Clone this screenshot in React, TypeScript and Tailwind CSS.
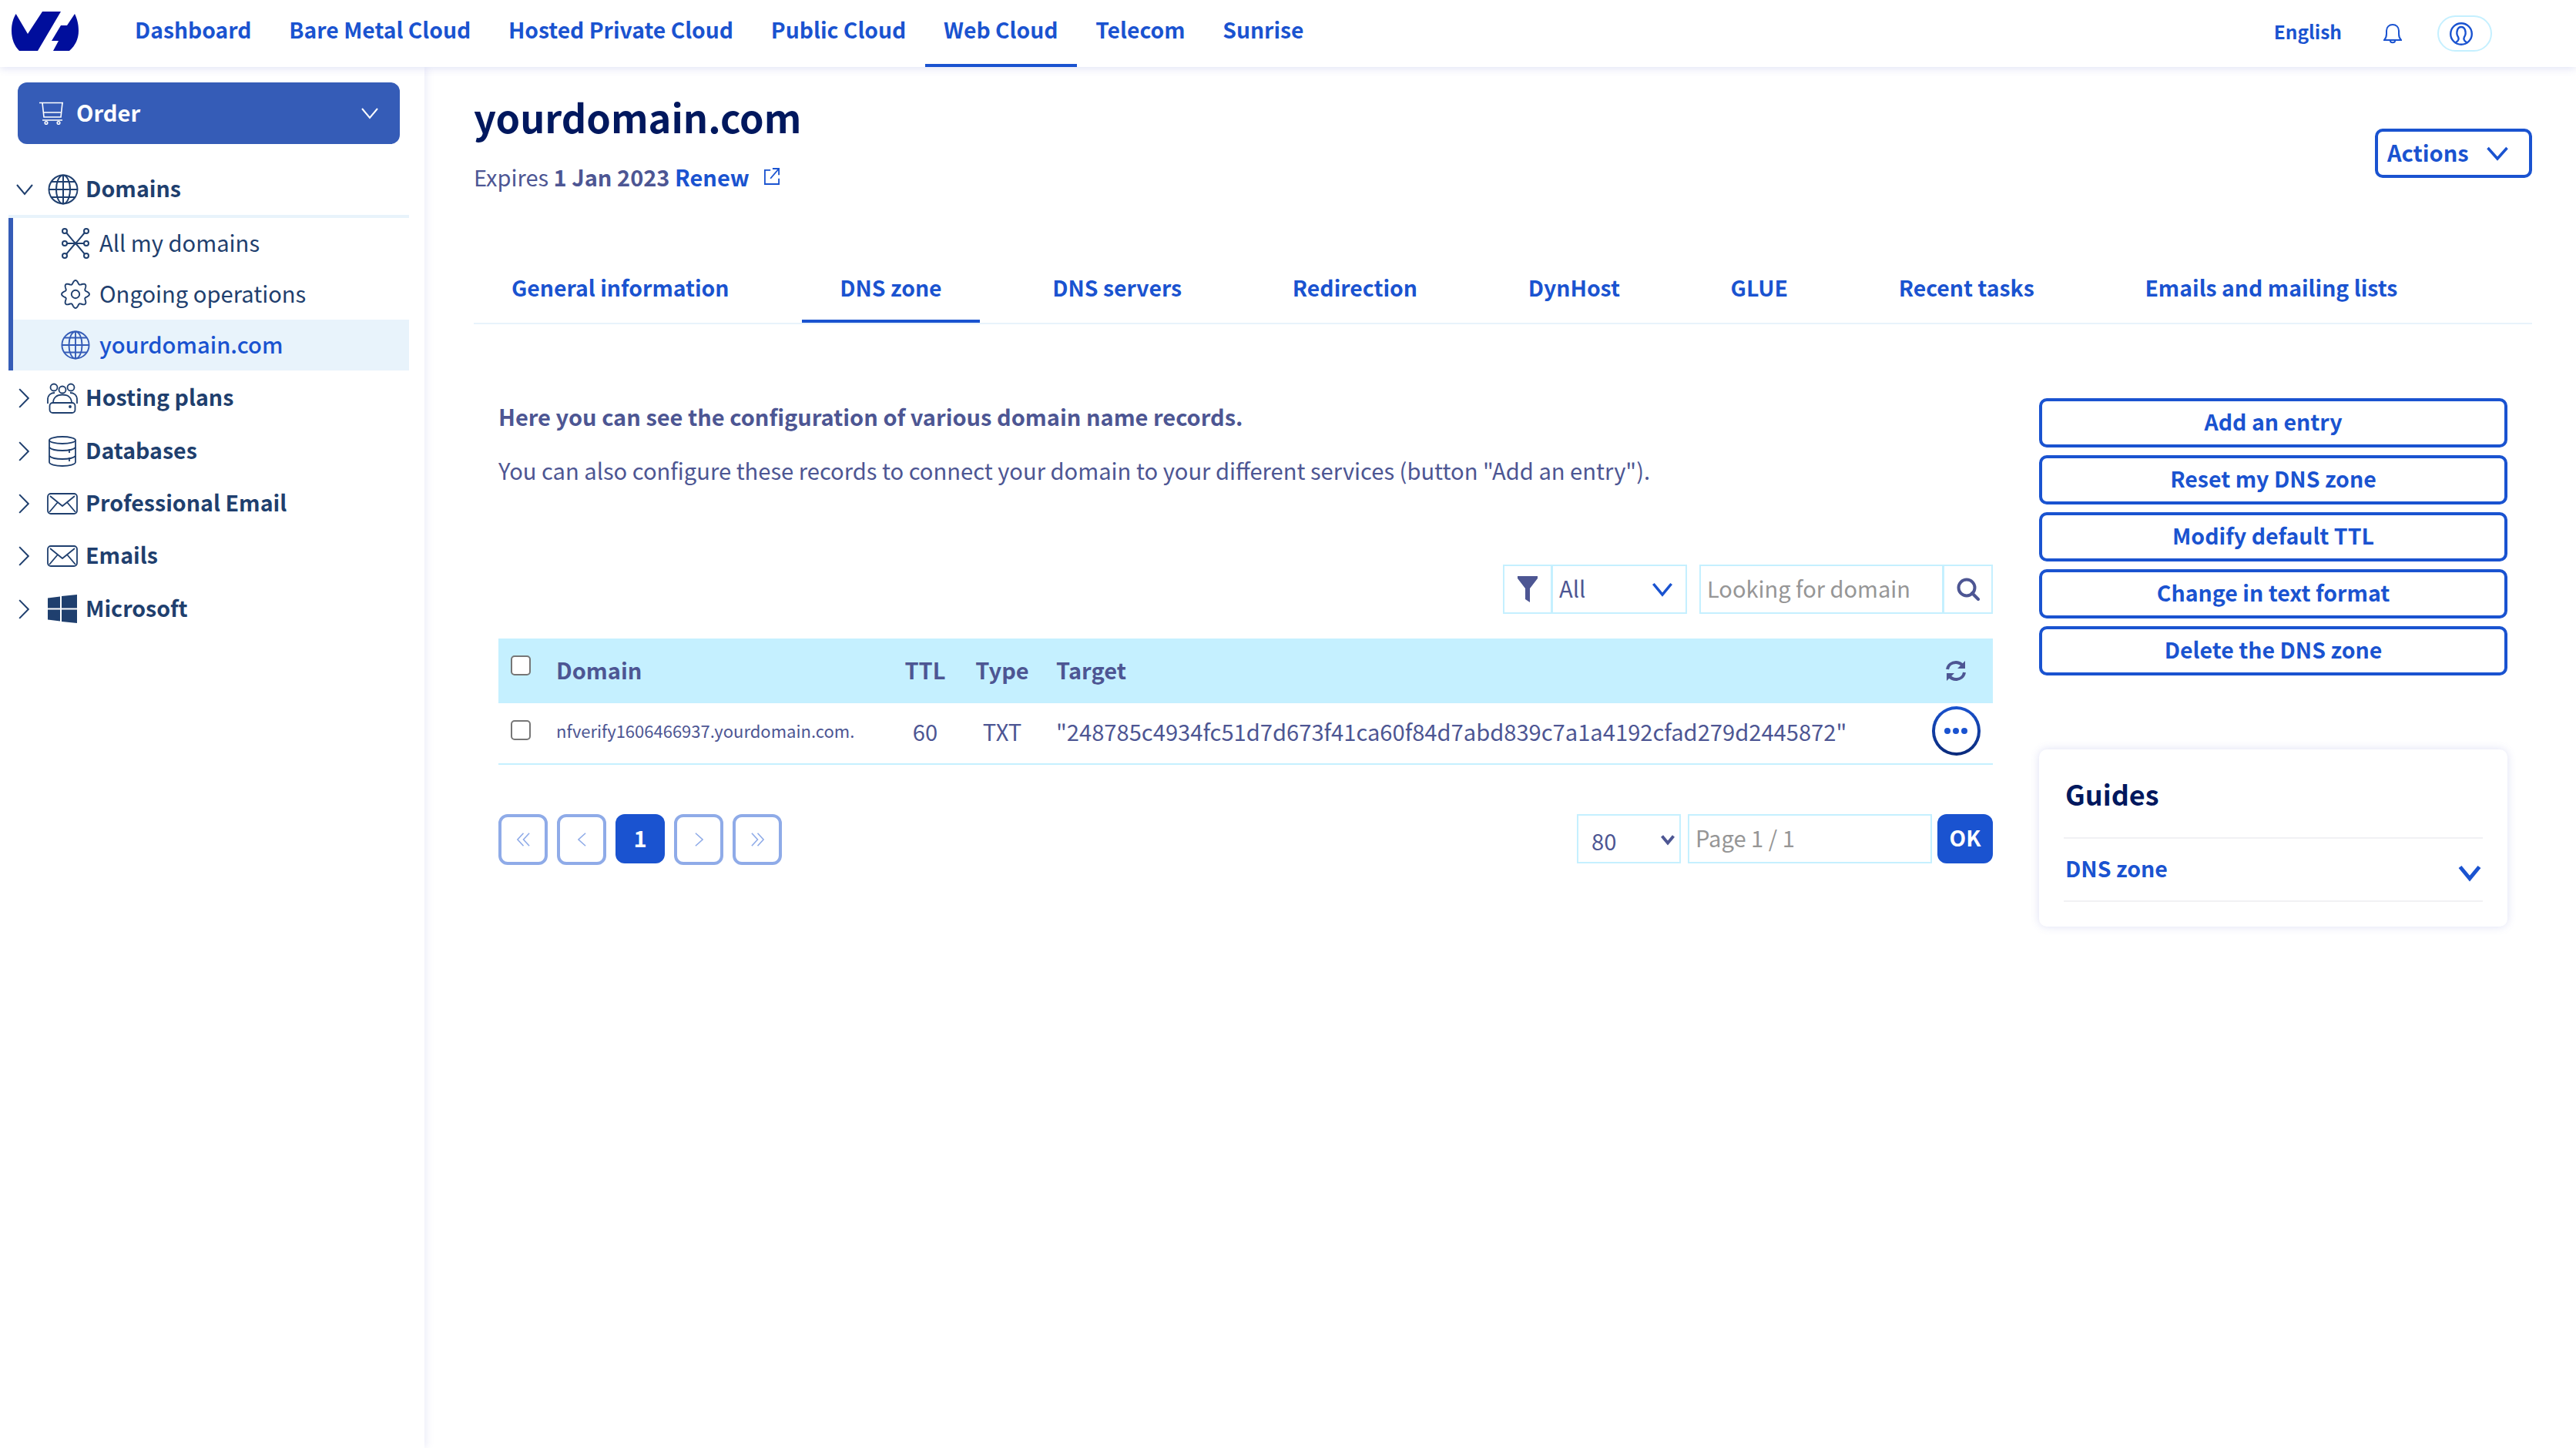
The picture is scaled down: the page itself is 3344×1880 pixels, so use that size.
import React from "react";

type IconProps = { className?: string };

const Chev = ({ dir, className, w = 2.5 }: { dir: "down" | "right" | "left"; className?: string; w?: number }) => {
  const pts = dir === "down" ? "M2 6 L12 18 L22 6" : dir === "right" ? "M2 1 L22 12 L2 23" : "M22 1 L2 12 L22 23";
  return (
    <svg viewBox="0 0 24 24" preserveAspectRatio="none" className={className} fill="none" stroke="currentColor" strokeWidth={w}>
      <path d={pts} vectorEffect="non-scaling-stroke" />
    </svg>
  );
};

const Logo = () => (
  <svg viewBox="0 0 88 52" className="w-[88px] h-[52px] shrink-0" fill="#000e9c">
    <path d="M5.7 3 L21 29 L40 0 L64 0 L34 51 L10 51 C4 45 0 36 0 25 C0 16 2 9 5.7 3 Z" />
    <path d="M82 3 L72 18 L64 18 L52 38 L61 38 L54 51 L75 51 C83 44 87 35 87 25 C87 16 85 9 82 3 Z" />
  </svg>
);

const Globe = ({ className }: IconProps) => (
  <svg viewBox="0 0 40 40" className={className} fill="none" stroke="currentColor" strokeWidth="2">
    <circle cx="20" cy="20" r="18.5" />
    <ellipse cx="20" cy="20" rx="9" ry="18.5" />
    <path d="M20 1.5 V38.5 M1.5 20 H38.5 M4.5 10 H35.5 M4.5 30 H35.5" />
  </svg>
);

const Network = ({ className }: IconProps) => (
  <svg viewBox="0 0 36 40" className={className} fill="none" stroke="currentColor" strokeWidth="2">
    <path d="M6 6 C11 12 15 17 18 20 C21 17 25 12 30 6 M6 34 C11 28 15 23 18 20 C21 23 25 28 30 34 M7 20 H29" />
    <circle cx="4" cy="4" r="3" />
    <circle cx="32" cy="4" r="3" />
    <circle cx="4" cy="20" r="3" />
    <circle cx="32" cy="20" r="3" />
    <circle cx="4" cy="36" r="3" />
    <circle cx="32" cy="36" r="3" />
  </svg>
);

const gearPath = (() => {
  const parts: string[] = [];
  for (let i = 0; i <= 160; i++) {
    const a = (i / 160) * Math.PI * 2;
    const r = 16.5 + 2.4 * Math.cos(8 * a);
    parts.push(`${i === 0 ? "M" : "L"}${(20 + r * Math.sin(a)).toFixed(2)} ${(20 - r * Math.cos(a)).toFixed(2)}`);
  }
  return parts.join(" ") + " Z";
})();

const Gear = ({ className }: IconProps) => (
  <svg viewBox="0 0 40 40" className={className} fill="none" stroke="currentColor" strokeWidth="2">
    <path d={gearPath} />
    <circle cx="20" cy="20" r="5.5" />
  </svg>
);

const Group = ({ className }: IconProps) => (
  <svg viewBox="0 0 40 40" className={className} fill="none" stroke="currentColor" strokeWidth="1.8" strokeLinejoin="round">
    <circle cx="9" cy="6" r="4.5" />
    <circle cx="31" cy="6" r="4.5" />
    <circle cx="20" cy="9" r="4.5" />
    <path d="M1 27 V22 C1 15 6 13 10 13 M39 27 V22 C39 15 34 13 30 13" />
    <path d="M8 26 C8 19 13 15.5 20 15.5 C27 15.5 32 19 32 26" />
    <rect x="3.5" y="26" width="33" height="13" rx="4" />
    <circle cx="30" cy="31" r="1" fill="currentColor" />
  </svg>
);

const Db = ({ className }: IconProps) => (
  <svg viewBox="0 0 36 40" className={className} fill="none" stroke="currentColor" strokeWidth="1.8">
    <ellipse cx="18" cy="5.5" rx="17" ry="4.5" />
    <path d="M1 5.5 V34 C1 37 9 39 18 39 C27 39 35 37 35 34 V5.5" />
    <path d="M1 15 C4 18 10 19 18 19 C26 19 32 18 35 15 M1 26 C4 29 10 30 18 30 C26 30 32 29 35 26 M27 17 V22 M27 28 V33" />
  </svg>
);

const Mail = ({ className }: IconProps) => (
  <svg viewBox="0 0 40 28" className={className} fill="none" stroke="currentColor" strokeWidth="1.8" strokeLinejoin="round">
    <rect x="1" y="1" width="38" height="26" rx="4" />
    <path d="M4 4 L20 17 L36 4 M3 25 L14 12 M37 25 L26 12" />
  </svg>
);

const Windows = ({ className }: IconProps) => (
  <svg viewBox="0 0 38 37" className={className} fill="currentColor">
    <path d="M0 4.5 L16 2.5 V17.5 H0 Z M18 2 L38 0 V17.5 H18 Z M0 19.5 H16 V34.5 L0 32.5 Z M18 19.5 H38 V37 L18 35 Z" />
  </svg>
);

const Cart = ({ className }: IconProps) => (
  <svg viewBox="0 0 32 30" className={className} fill="none" stroke="currentColor" strokeWidth="1.6">
    <path d="M0 1.5 H31 M4 1.5 L6 20 H28 L30 1.5 M6 14 H29 M4 24 H30" />
    <circle cx="9" cy="27.5" r="1.8" />
    <circle cx="25" cy="27.5" r="1.8" />
  </svg>
);

const navItems = ["Dashboard", "Bare Metal Cloud", "Hosted Private Cloud", "Public Cloud", "Web Cloud", "Telecom", "Sunrise"];
const tabs = ["General information", "DNS zone", "DNS servers", "Redirection", "DynHost", "GLUE", "Recent tasks", "Emails and mailing lists"];
const actions = ["Add an entry", "Reset my DNS zone", "Modify default TTL", "Change in text format", "Delete the DNS zone"];

const Check = ({ className = "" }: { className?: string }) => (
  <span className={`block w-[26px] h-[26px] rounded-[5px] border-2 border-[#767676] bg-white shrink-0 ${className}`} />
);

const TopRow = ({ label, icon }: { label: string; icon: React.ReactNode }) => (
  <div className="h-[68.4px] flex items-center pl-[24px] text-[#1f3f6e] font-semibold text-[28.6px]">
    <Chev dir="right" className="w-[14px] h-[26px]" w={2} />
    <span className="w-[40px] ml-[23px] flex justify-center">{icon}</span>
    <span className="ml-[10px] mb-[4px]">{label}</span>
  </div>
);

const SubRow = ({ label, icon, active }: { label: string; icon: React.ReactNode; active?: boolean }) => (
  <div className={`h-[66px] flex items-center pl-[62px] ${active ? "bg-[#e8f3fb] text-[#1a53d0] font-medium" : "text-[#1f3f6e]"}`}>
    <span className="w-[38px] flex justify-center">{icon}</span>
    <span className="ml-[12px] mb-[4px]">{label}</span>
  </div>
);

const PageBtn = ({ children }: { children: React.ReactNode }) => (
  <span className="w-[64px] h-[66px] rounded-[12px] border-[4px] border-[#8fabe8] text-[#8fabe8] flex items-center justify-center">{children}</span>
);

const DoubleChev = ({ flip }: { flip?: boolean }) => (
  <svg viewBox="0 0 20 24" preserveAspectRatio="none" className="w-[19px] h-[18px]" fill="none" stroke="currentColor" strokeWidth="1.6">
    {flip ? (
      <path d="M2 1 L10 12 L2 23 M10 1 L18 12 L10 23" vectorEffect="non-scaling-stroke" />
    ) : (
      <path d="M18 1 L10 12 L18 23 M10 1 L2 12 L10 23" vectorEffect="non-scaling-stroke" />
    )}
  </svg>
);

export default function App() {
  return (
    <div className="w-[3344px] h-[1880px] overflow-hidden bg-white flex flex-col text-[29.15px] leading-[44px] font-['Noto_Sans_CJK_SC','Noto_Sans',sans-serif] text-[#4d5693]">
      <header className="relative z-20 h-[87px] shrink-0 bg-white shadow-[0_2px_10px_rgba(90,100,200,0.18)] flex items-stretch pl-[15px] text-[28.3px] whitespace-nowrap">
        <div className="pt-[15px]">
          <Logo />
        </div>
        <nav className="flex ml-[47.6px] font-semibold text-[#1a53d0]">
          {navItems.map((n) => (
            <a key={n} className={`px-[24.4px] flex items-center pb-[7px] border-b-[4px] ${n === "Web Cloud" ? "border-[#1a53d0]" : "border-transparent"}`}>
              {n}
            </a>
          ))}
        </nav>
        <div className="ml-auto flex items-center pr-[109px] text-[#1a53d0]">
          <span className="font-semibold text-[24.5px] mb-[5px]">English</span>
          <svg viewBox="0 0 24 26" className="w-[24px] h-[26px] ml-[54px]" fill="none" stroke="currentColor" strokeWidth="2">
            <path d="M1 21 C3 19 4 17 4 13 V9 C4 4 7.5 1 12 1 C16.5 1 20 4 20 9 V13 C20 17 21 19 23 21 Z" />
            <path d="M9 22 C9 25 15 25 15 22" />
          </svg>
          <span className="ml-[46px] w-[71px] h-[47px] rounded-[24px] border-2 border-[#c5f0ff] flex items-center justify-center pr-[10px]">
            <svg viewBox="0 0 30 32" className="w-[30px] h-[32px]" fill="none" stroke="currentColor" strokeWidth="2.4">
              <circle cx="15" cy="16" r="13.8" />
              <path d="M8 27 C12 25 12 22 11 20 C9 17 9 14 10 11 C11 8 13 7 15 7 C17 7 19 8 20 11 C21 14 21 17 19 20 C18 22 18 25 22 27" />
            </svg>
          </span>
        </div>
      </header>

      <div className="flex flex-1 min-h-0">
        <aside className="relative z-10 w-[551px] shrink-0 bg-white shadow-[2px_0_10px_rgba(90,100,200,0.13)] pt-[20px]">
          <button className="mx-[23px] w-[496px] h-[80px] rounded-[12px] bg-[#355cb7] text-white font-semibold flex items-center pl-[28px] pr-[27px]">
            <Cart className="w-[32px] h-[30px]" />
            <span className="ml-[16px] mb-[4px]">Order</span>
            <Chev dir="down" className="w-[24px] h-[24px] ml-auto" w={2} />
          </button>

          <div className="mt-[26px] ml-[11px] w-[520px]">
            <div className="h-[70px] border-b-[4px] border-[#e8f3fb] flex items-center pl-[9px] text-[#1f3f6e] font-semibold text-[28.6px]">
              <Chev dir="down" className="w-[24px] h-[24px]" w={2} />
              <Globe className="w-[40px] h-[40px] ml-[18px]" />
              <span className="ml-[9px] mb-[4px]">Domains</span>
            </div>
            <div className="border-l-[6px] border-[#355cb7]">
              <SubRow label="All my domains" icon={<Network className="w-[36px] h-[40px]" />} />
              <SubRow label="Ongoing operations" icon={<Gear className="w-[38px] h-[40px]" />} />
              <SubRow label="yourdomain.com" active icon={<Globe className="w-[38px] h-[40px] text-[#355cb7]" />} />
            </div>
          </div>

          <div className="mt-[2px]">
            <TopRow label="Hosting plans" icon={<Group className="w-[40px] h-[40px]" />} />
            <TopRow label="Databases" icon={<Db className="w-[36px] h-[40px]" />} />
            <TopRow label="Professional Email" icon={<Mail className="w-[40px] h-[28px]" />} />
            <TopRow label="Emails" icon={<Mail className="w-[40px] h-[28px]" />} />
            <TopRow label="Microsoft" icon={<Windows className="w-[38px] h-[37px]" />} />
          </div>
        </aside>

        <main className="flex-1 min-w-0 pl-[64px] pr-[57px]">
          <div className="flex justify-between items-start">
            <div className="pt-[32px]">
              <h1 className="h-[72px] leading-[64px] text-[50.5px] font-bold text-[#00185e]">yourdomain.com</h1>
              <p className="mt-[18px] h-[40px] leading-[40px] flex items-center text-[29px]">
                <span>Expires&nbsp;</span>
                <span className="font-semibold">1 Jan 2023&nbsp;</span>
                <a className="font-semibold text-[#1a53d0]">Renew</a>
                <svg viewBox="0 0 22 24" className="w-[20px] h-[22px] ml-[19px] text-[#1a53d0]" fill="none" stroke="currentColor" strokeWidth="2">
                  <path d="M9 3 H1 V23 H21 V15 M12 1 H21 V10 M21 1 L9 15" />
                </svg>
              </p>
            </div>
            <button className="mt-[80px] w-[204px] h-[64px] border-[4px] border-[#1a53d0] rounded-[10px] text-[#1a53d0] font-semibold flex items-center pl-[12px] text-[29px]">
              <span className="mb-[4px]">Actions</span>
              <Chev dir="down" className="w-[30px] h-[28px] ml-[22px]" w={3.5} />
            </button>
          </div>

          <div className="mt-[82px] flex h-[90px] border-b-2 border-[#e8f3fb] gap-[45.7px] text-[28.4px] font-semibold text-[#1a53d0] whitespace-nowrap">
            {tabs.map((t) => (
              <a key={t} className={`h-[88px] px-[49px] flex items-center border-b-[4px] ${t === "DNS zone" ? "border-[#1a53d0]" : "border-transparent"}`}>
                {t}
              </a>
            ))}
          </div>

          <div className="pl-[32px] pr-[32px] flex gap-[60px]">
            <section className="w-[1940px] shrink-0">
              <p className="mt-[97px] font-semibold text-[29px]">Here you can see the configuration of various domain name records.</p>
              <p className="mt-[26px]">You can also configure these records to connect your domain to your different services (button "Add an entry").</p>

              <div className="mt-[101px] h-[64px] flex justify-end">
                <div className="w-[64px] border-2 border-[#c5f0ff] flex items-center justify-center">
                  <svg viewBox="0 0 26 34" className="w-[26px] h-[34px]" fill="#4d5693">
                    <path d="M0 0 H26 V3 L16 16 V34 L10 30 V16 L0 3 Z" />
                  </svg>
                </div>
                <div className="w-[176px] -ml-[1px] border-2 border-[#c5f0ff] flex items-center justify-between pl-[8px] pr-[16px]">
                  <span className="mb-[4px]">All</span>
                  <Chev dir="down" className="w-[28px] h-[28px] text-[#1a53d0]" w={3.5} />
                </div>
                <div className="ml-[16px] w-[317px] border-2 border-[#c5f0ff] flex items-center pl-[8px] pb-[4px] text-[#969696] text-[29px]">Looking for domain</div>
                <div className="w-[65px] -ml-[1px] border-2 border-[#c5f0ff] flex items-center justify-center">
                  <svg viewBox="0 0 30 30" className="w-[30px] h-[32px]" fill="none" stroke="#4d5693" strokeWidth="4">
                    <circle cx="13" cy="13" r="10.5" />
                    <path d="M20 20 L28 28" strokeLinecap="round" />
                  </svg>
                </div>
              </div>

              <div className="mt-[32px] h-[84px] bg-[#c5f0ff] flex items-center font-semibold text-[29px]">
                <div className="w-[75px] pl-[16px]">
                  <Check className="mb-[14px]" />
                </div>
                <div className="w-[433px] mb-[4px]">Domain</div>
                <div className="w-[92px] mb-[4px] text-center">TTL</div>
                <div className="w-[108px] mb-[4px] text-center">Type</div>
                <div className="flex-1 mb-[4px] pl-[16px]">Target</div>
                <div className="w-[96px] flex justify-center">
                  <svg viewBox="0 0 28 28" className="w-[28px] h-[28px]" fill="none" stroke="#4d5693" strokeWidth="4">
                    <path d="M3 12 C4 6 9 3 14 3 C18 3 21 5 24 8" />
                    <path d="M25 16 C24 22 19 25 14 25 C10 25 7 23 4 20" />
                    <path d="M26 1 V11 H16 Z M2 27 V17 H12 Z" fill="#4d5693" stroke="none" />
                  </svg>
                </div>
              </div>
              <div className="h-[80px] border-b-2 border-[#c5f0ff] flex items-center">
                <div className="w-[75px] pl-[16px]">
                  <Check className="mb-[8px]" />
                </div>
                <div className="w-[433px] mb-[8px] text-[22px]">nfverify1606466937.yourdomain.com.</div>
                <div className="w-[92px] mb-[6px] text-center">60</div>
                <div className="w-[108px] mb-[6px] text-center">TXT</div>
                <div className="flex-1 mb-[6px] pl-[16px] whitespace-nowrap">"248785c4934fc51d7d673f41ca60f84d7abd839c7a1a4192cfad279d2445872"</div>
                <div className="w-[96px] flex justify-center self-start pt-[4px]">
                  <span className="relative w-[63px] h-[64px] rounded-full p-[4px] bg-gradient-to-b from-[#1a53d0] to-[#0a2a7a]">
                    <span className="w-full h-full rounded-full bg-white flex items-center justify-center gap-[3px]">
                      <i className="w-[8px] h-[8px] rounded-full bg-[#1a53d0]" />
                      <i className="w-[8px] h-[8px] rounded-full bg-[#1a53d0]" />
                      <i className="w-[8px] h-[8px] rounded-full bg-[#1a53d0]" />
                    </span>
                  </span>
                </div>
              </div>

              <div className="mt-[64px] flex items-start">
                <div className="flex gap-[12px]">
                  <PageBtn><DoubleChev /></PageBtn>
                  <PageBtn><Chev dir="left" className="w-[11px] h-[18px]" w={1.6} /></PageBtn>
                  <span className="w-[64px] h-[64px] rounded-[12px] bg-[#1a53d0] text-white font-bold flex items-center justify-center pb-[4px]">1</span>
                  <PageBtn><Chev dir="right" className="w-[11px] h-[18px]" w={1.6} /></PageBtn>
                  <PageBtn><DoubleChev flip /></PageBtn>
                </div>
                <div className="ml-auto flex">
                  <div className="w-[135px] h-[64px] border-2 border-[#c5f0ff] flex items-center pl-[17px] pt-[4px] relative">
                    80
                    <Chev dir="down" className="absolute right-[6px] top-[22px] w-[18px] h-[18px]" w={4} />
                  </div>
                  <div className="ml-[9px] w-[317px] h-[64px] border-2 border-[#c5f0ff] flex items-center pl-[8px] pb-[4px] text-[#969696]">Page 1 / 1</div>
                  <div className="ml-[7px] w-[72px] h-[64px] rounded-[12px] bg-[#1a53d0] text-white font-bold flex items-center justify-center pb-[4px] text-[28px]">OK</div>
                </div>
              </div>
            </section>

            <aside className="flex-1 min-w-0 pt-[96px] text-[28.5px]">
              <div className="flex flex-col gap-[10px]">
                {actions.map((a) => (
                  <button key={a} className="h-[64px] border-[4px] border-[#1a53d0] rounded-[10px] text-[#1a53d0] font-semibold flex items-center justify-center pb-[4px]">
                    {a}
                  </button>
                ))}
              </div>
              <div className="mt-[96px] h-[230px] rounded-[10px] bg-white shadow-[0_0_12px_rgba(90,100,200,0.2)] px-[32px] pt-[32px]">
                <h2 className="h-[50px] leading-[50px] pl-[2px] text-[36px] font-bold text-[#00185e]">Guides</h2>
                <div className="mt-[32px] border-t-2 border-[#f1f1f4] border-b-2 h-[84px] flex items-center justify-between pl-[2px] pr-[2px] pb-[5px] font-semibold text-[#1a53d0]">
                  DNS zone
                  <Chev dir="down" className="w-[30px] h-[30px] mt-[12px]" w={5} />
                </div>
              </div>
            </aside>
          </div>
        </main>
      </div>
    </div>
  );
}
